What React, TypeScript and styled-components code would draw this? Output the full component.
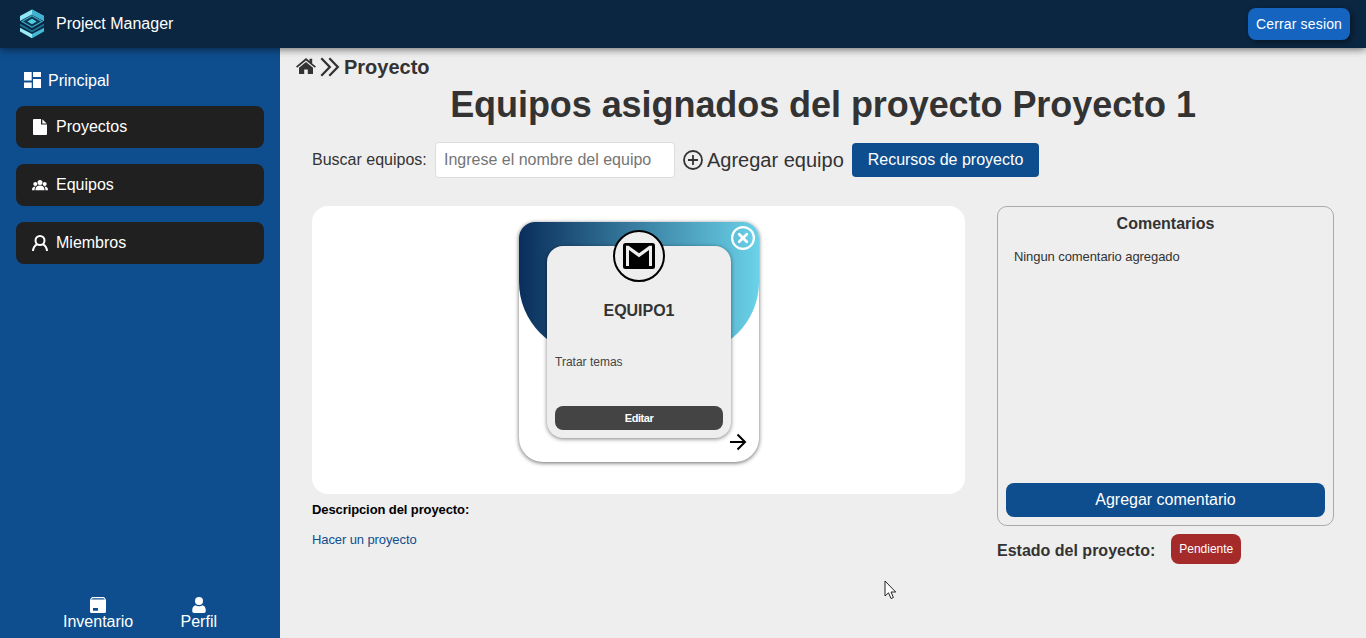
import React from 'react';
import styled, { createGlobalStyle } from 'styled-components';

const GlobalStyle = createGlobalStyle`
  * { box-sizing: border-box; }
  body { margin: 0; background: #eeeeee; font-family: "Liberation Sans", Arial, sans-serif; font-size: 16px; color: #333; overflow: hidden; }
  h1, h2, h3, p { margin: 0; }
  button { font-family: inherit; border: 0; cursor: pointer; padding: 0; }
  svg { display: block; flex: none; }
`;

const Page = styled.div`
  display: flex;
  flex-direction: column;
  height: 100vh;
`;
const Header = styled.header`
  display: flex;
  align-items: center;
  height: 48px;
  flex: none;
  padding: 0 16px 0 20px;
  background: #0a2640;
  color: #fff;
  box-shadow: 0 1px 8px rgba(0, 0, 0, 0.6);
  position: relative;
  z-index: 1;
`;
const Brand = styled.span`
  margin-left: 12px;
  flex: 1;
  line-height: 48px;
  height: 48px;
`;
const LogoutButton = styled.button`
  width: 102px;
  height: 32px;
  border-radius: 8px;
  background: #1565c0;
  color: #fff;
  font-size: 14px;
  letter-spacing: 0.16px;
  box-shadow: 2px 2px 5px rgba(0, 0, 0, 0.4);
`;
const Body = styled.div`
  display: flex;
  flex: 1;
  min-height: 0;
`;
const Sidebar = styled.nav`
  display: flex;
  flex-direction: column;
  width: 280px;
  padding: 16px 16px 8px;
  background: #0f4e8e;
  color: #fff;
`;
const MainLink = styled.a`
  display: flex;
  align-items: center;
  gap: 8px;
  height: 32px;
  padding: 1px 0 0 8px;
  margin-bottom: 10px;
`;
const NavItem = styled.a`
  display: flex;
  align-items: center;
  gap: 8px;
  height: 42px;
  padding: 0 16px 1px;
  margin-bottom: 16px;
  border-radius: 8px;
  background: #202020;
`;
const BottomLinks = styled.div`
  display: flex;
  justify-content: space-between;
  margin: auto 47px 0 47px;
`;
const BottomLink = styled.a`
  display: flex;
  flex-direction: column;
  align-items: center;
  line-height: 17px;
`;
const Main = styled.main`
  flex: 1;
  padding: 8px 32px 0;
`;
const Breadcrumb = styled.h2`
  display: flex;
  align-items: center;
  gap: 4px;
  height: 22px;
  margin-left: -16px;
  font-size: 20px;
`;
const Title = styled.h1`
  height: 48px;
  margin-top: 2px;
  line-height: 50px;
  font-size: 36px;
  letter-spacing: -0.06px;
  text-align: center;
  white-space: nowrap;
`;
const Toolbar = styled.div`
  display: flex;
  align-items: center;
  height: 36px;
  margin-top: 14px;
`;
const Label = styled.label`
  width: 123px;
  padding-bottom: 1px;
`;
const Search = styled.input`
  width: 240px;
  height: 36px;
  padding: 0 8px 1px;
  border: 1px solid #ddd;
  border-radius: 4px;
  font: inherit;
  &::placeholder { color: #757575; }
`;
const AddTeam = styled.button`
  display: flex;
  align-items: center;
  gap: 4px;
  width: 161px;
  margin: 0 8px;
  background: none;
  color: #333;
  font-size: 20px;
  white-space: nowrap;
`;
const Resources = styled.button`
  width: 187px;
  height: 34px;
  padding-bottom: 1px;
  border-radius: 4px;
  background: #0f4e8e;
  color: #fff;
  font-size: 16px;
`;
const Columns = styled.div`
  display: flex;
  gap: 32px;
  margin-top: 28px;
`;
const TeamsColumn = styled.section`
  width: 653px;
`;
const TeamsPanel = styled.div`
  display: flex;
  justify-content: center;
  height: 288px;
  padding-top: 16px;
  border-radius: 16px;
  background: #fff;
`;
const Card = styled.article`
  position: relative;
  width: 240px;
  height: 240px;
  padding: 24px 28px;
  margin-left: 1px;
  border-radius: 16px 16px 24px 24px;
  box-shadow: 0 1px 4px rgba(0, 0, 0, 0.6);
  &::before {
    content: '';
    position: absolute;
    inset: 0 0 auto;
    height: 132px;
    border-radius: 16px 16px 72px 72px;
    background: linear-gradient(90deg, #0a2e5c, #6ad2e8);
  }
`;
const CardInner = styled.div`
  position: relative;
  display: flex;
  flex-direction: column;
  height: 192px;
  padding: 0 8px 8px;
  border-radius: 16px;
  background: #eee;
  box-shadow: 0 1px 4px rgba(0, 0, 0, 0.5);
`;
const Avatar = styled.div`
  display: grid;
  place-items: center;
  align-self: center;
  width: 52px;
  height: 52px;
  margin-top: -16px;
  border: 2px solid #000;
  border-radius: 50%;
  background: #eee;
`;
const TeamName = styled.h3`
  margin-top: 20px;
  font-size: 16px;
  line-height: 18px;
  letter-spacing: -0.05px;
  text-align: center;
`;
const TeamText = styled.p`
  margin-top: 35px;
  font-size: 12px;
  line-height: 14px;
  color: #444;
`;
const EditButton = styled.button`
  height: 24px;
  margin-top: auto;
  border-radius: 8px;
  background: #444;
  color: #fff;
  font-size: 11px;
  font-weight: bold;
  letter-spacing: -0.45px;
`;
const CloseButton = styled.button`
  position: absolute;
  top: 4px;
  right: 4px;
  background: none;
`;
const OpenButton = styled.button`
  position: absolute;
  right: 12px;
  bottom: 11px;
  background: none;
`;
const DescriptionTitle = styled.h3`
  margin-top: 8px;
  font-size: 13px;
  line-height: 16px;
  letter-spacing: -0.1px;
  color: #000;
`;
const Description = styled.p`
  margin-top: 14px;
  font-size: 13px;
  line-height: 16px;
  letter-spacing: -0.1px;
  color: #0f4e8e;
`;
const SideColumn = styled.aside`
  width: 337px;
`;
const Comments = styled.div`
  display: flex;
  flex-direction: column;
  height: 320px;
  padding: 8px;
  border: 1px solid #aaa;
  border-radius: 10px;
`;
const CommentsTitle = styled.h3`
  font-size: 16px;
  line-height: 17px;
  text-align: center;
`;
const Empty = styled.p`
  margin: 17px 8px 0;
  font-size: 13px;
  line-height: 15px;
  letter-spacing: -0.08px;
`;
const AddComment = styled.button`
  height: 34px;
  margin-top: auto;
  padding-bottom: 1px;
  border-radius: 8px;
  background: #0f4e8e;
  color: #fff;
  font-size: 16px;
`;
const Status = styled.div`
  display: flex;
  align-items: center;
  gap: 16px;
  margin-top: 8px;
`;
const StatusLabel = styled.h3`
  padding-top: 3px;
  font-size: 16px;
`;
const Badge = styled.span`
  width: 70px;
  height: 30px;
  border-radius: 8px;
  background: #a52a2a;
  color: #fff;
  font-size: 12px;
  line-height: 30px;
  text-align: center;
`;
const Pointer = styled.svg`
  position: fixed;
  left: 884px;
  top: 580px;
`;

const Logo = () => (
  <svg width="24" height="30" viewBox="0 0 24 30">
    <path d="M12 .5 24 7v5L12 5.500 0 12V7Z" fill="#8fe6f4" />
    <path d="M12 .5 24 7v5L12 5.500Z" fill="#3eb3d1" />
    <path d="M12 6.800 22 12.500 12 18.200 2 12.500Z" fill="#0d3552" stroke="#3aa9c6" strokeWidth="1.200" />
    <path d="m12 9.800 4.700 2.700-4.700 2.700-4.700-2.700Z" fill="#54cfe2" />
    <path d="m0 14.500 12 6.800 12-6.800v2.300l-12 6.800-12-6.800Z" fill="#1c7090" />
    <path d="m0 18.800 12 6.200v4.300L0 22.500Z" fill="#9aeaf5" />
    <path d="m12 25 12-6.200v3.700l-12 6.800Z" fill="#43b9d5" />
  </svg>
);
const DashboardIcon = () => (
  <svg width="16" height="18" viewBox="0 0 16 18" fill="#fff" overflow="visible">
    <path d="M0 0h7.700v8.500H0zM9 0h8v5H9zM0 10.500h7.700V16H0zM9 7h8v9H9z" />
  </svg>
);
const FileIcon = () => (
  <svg width="16" height="16" viewBox="0 0 16 16" fill="#fff">
    <path d="M2 0h7v5.500h6V15a1 1 0 0 1-1 1H2a1 1 0 0 1-1-1V1a1 1 0 0 1 1-1Zm8.300.3L14.700 4.500h-4.400Z" />
  </svg>
);
const TeamIcon = () => (
  <svg width="16" height="16" viewBox="0 0 16 16" fill="#fff">
    <circle cx="8" cy="5.600" r="2.500" />
    <circle cx="3.300" cy="7" r="2" />
    <circle cx="12.700" cy="7" r="2" />
    <path d="M3.400 13.200c0-3 1.600-4.700 4.600-4.700s4.600 1.700 4.600 4.700ZM0 13.200c0-2.500 1-3.700 3.800-3.700-.9.900-1.200 2.200-1.200 3.700ZM16 13.200c0-2.500-1-3.700-3.800-3.700.9.900 1.200 2.200 1.200 3.700Z" />
  </svg>
);
const MemberIcon = () => (
  <svg width="16" height="16" viewBox="0 0 16 16" fill="none" stroke="#fff" strokeWidth="2">
    <circle cx="8" cy="5.500" r="4.500" />
    <path d="M1 16c.2-3.200 1.500-5.400 4-6.700M15 16c-.2-3.200-1.500-5.400-4-6.700" />
  </svg>
);
const BoxIcon = () => (
  <svg width="16" height="16" viewBox="0 0 16 16" fill="#fff">
    <path d="M0 2.500h16v12a1.500 1.500 0 0 1-1.500 1.500h-13A1.500 1.500 0 0 1 0 14.500ZM3 11v2.700h5V11Z" fillRule="evenodd" />
    <path d="M0 2.600 2 0h12l2 2.600H14.500L13.500 1.300h-11L1.500 2.600Z" />
  </svg>
);
const ProfileIcon = () => (
  <svg width="16" height="16" viewBox="0 0 16 16" fill="#fff">
    <circle cx="8" cy="4" r="4" />
    <path d="M4.500 8.200C5.500 9 6.700 9.300 8 9.300s2.500-.3 3.500-1.100c2.200.6 3.300 2.600 3.300 5.300 0 1.700-.7 2.500-2 2.500H3.200c-1.300 0-2-.8-2-2.500 0-2.700 1.100-4.700 3.300-5.300Z" />
  </svg>
);
const HomeIcon = () => (
  <svg width="20" height="20" viewBox="0 0 20 20" fill="#333">
    <path d="m0 9.500 10-8.500 3.500 3V1.800h2.700v4.600L20 9.500l-1.200 1.300L10 3.500l-8.800 7.300Z" />
    <path d="m3 10.800 7-5.800 7 5.800v6.200h-5.200v-4.500H8.200v4.500H3Z" />
  </svg>
);
const ChevronsIcon = () => (
  <svg width="20" height="20" viewBox="0 0 20 20" fill="none" stroke="#333" strokeWidth="2.300">
    <path d="m1.300 1.200 8.500 8.800-8.500 8.800M9.300 1.200l8.500 8.800-8.500 8.800" />
  </svg>
);
const PlusIcon = () => (
  <svg width="20" height="20" viewBox="0 0 20 20" fill="none" stroke="#333" strokeWidth="1.800">
    <circle cx="10" cy="10" r="9" />
    <path d="M5 10h10M10 5v10" />
  </svg>
);
const MailIcon = () => (
  <svg width="32" height="26" viewBox="0 0 32 26">
    <rect width="32" height="26" rx="2.500" />
    <path d="M3 23V2.700h2.600L16 10.300l10.400-7.600H29V23h-3V7L16 14.300 6 7v16Z" fill="#eee" />
  </svg>
);
const CloseIcon = () => (
  <svg width="24" height="24" viewBox="0 0 24 24" fill="none" stroke="#fff">
    <circle cx="12" cy="12" r="10.900" strokeWidth="2.200" />
    <path d="m8.200 8.200 7.600 7.600M15.800 8.200l-7.600 7.600" strokeWidth="2.700" strokeLinecap="round" />
  </svg>
);
const ArrowIcon = () => (
  <svg width="18" height="18" viewBox="0 0 18 18" fill="none" stroke="#000" strokeWidth="2">
    <path d="M1 9h15M8.500 1.500 16 9l-7.500 7.500" />
  </svg>
);

export default function App() {
  return (
    <Page>
      <GlobalStyle />
      <Header>
        <Logo />
        <Brand>Project Manager</Brand>
        <LogoutButton>Cerrar sesion</LogoutButton>
      </Header>
      <Body>
        <Sidebar>
          <MainLink><DashboardIcon />Principal</MainLink>
          <NavItem><FileIcon />Proyectos</NavItem>
          <NavItem><TeamIcon />Equipos</NavItem>
          <NavItem><MemberIcon />Miembros</NavItem>
          <BottomLinks>
            <BottomLink><BoxIcon />Inventario</BottomLink>
            <BottomLink><ProfileIcon />Perfil</BottomLink>
          </BottomLinks>
        </Sidebar>
        <Main>
          <Breadcrumb><HomeIcon /><ChevronsIcon />Proyecto</Breadcrumb>
          <Title>Equipos asignados del proyecto Proyecto 1</Title>
          <Toolbar>
            <Label htmlFor="team-search">Buscar equipos:</Label>
            <Search id="team-search" placeholder="Ingrese el nombre del equipo" />
            <AddTeam><PlusIcon />Agregar equipo</AddTeam>
            <Resources>Recursos de proyecto</Resources>
          </Toolbar>
          <Columns>
            <TeamsColumn>
              <TeamsPanel>
                <Card>
                  <CardInner>
                    <Avatar><MailIcon /></Avatar>
                    <TeamName>EQUIPO1</TeamName>
                    <TeamText>Tratar temas</TeamText>
                    <EditButton>Editar</EditButton>
                  </CardInner>
                  <CloseButton aria-label="Quitar equipo"><CloseIcon /></CloseButton>
                  <OpenButton aria-label="Abrir equipo"><ArrowIcon /></OpenButton>
                </Card>
              </TeamsPanel>
              <DescriptionTitle>Descripcion del proyecto:</DescriptionTitle>
              <Description>Hacer un proyecto</Description>
            </TeamsColumn>
            <SideColumn>
              <Comments>
                <CommentsTitle>Comentarios</CommentsTitle>
                <Empty>Ningun comentario agregado</Empty>
                <AddComment>Agregar comentario</AddComment>
              </Comments>
              <Status>
                <StatusLabel>Estado del proyecto:</StatusLabel>
                <Badge>Pendiente</Badge>
              </Status>
            </SideColumn>
          </Columns>
        </Main>
      </Body>
      <Pointer width="13" height="20" viewBox="0 0 13 20">
        <path d="M1 1v15l3.500-3.200L7 18.500l2.400-1L7 12h4.700Z" fill="#fff" stroke="#222" />
      </Pointer>
    </Page>
  );
}
